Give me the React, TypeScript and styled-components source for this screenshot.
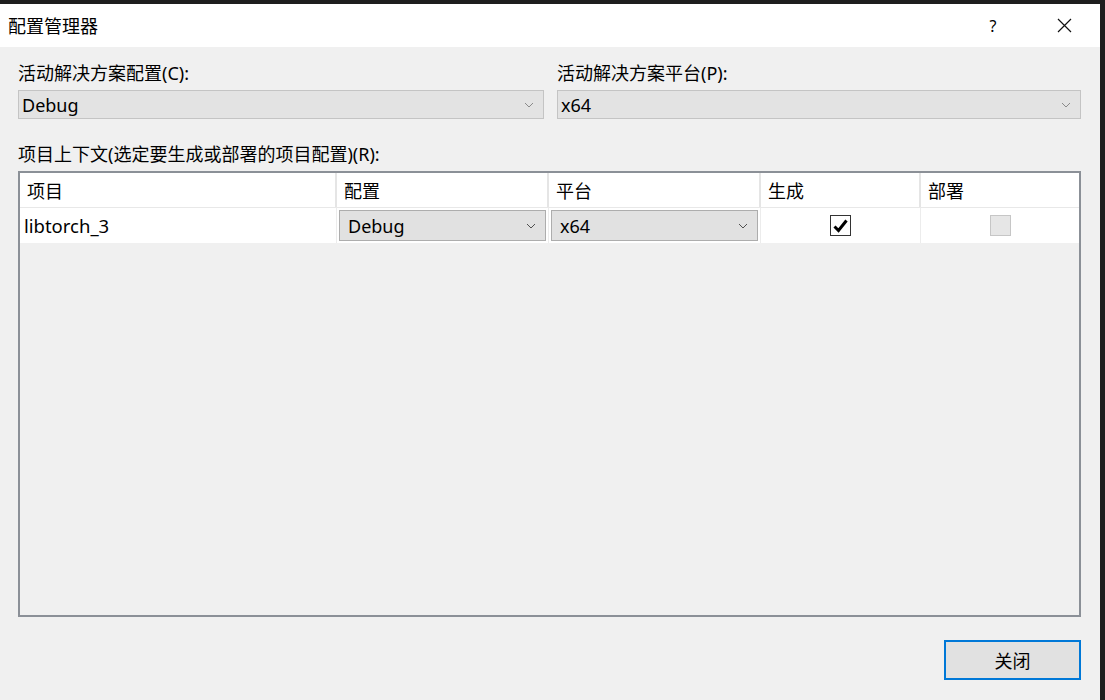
import { createGlobalStyle, styled } from 'styled-components';

const GlobalStyle = createGlobalStyle`
  html, body {
    margin: 0;
    padding: 0;
    background: #1e1e1e;
  }
  * {
    box-sizing: border-box;
  }
`;

const FONT = `"Noto Sans", "Noto Sans CJK SC", sans-serif`;

type Column = { key: string; title: string };

const COLUMNS: Column[] = [
  { key: 'project', title: '项目' },
  { key: 'config', title: '配置' },
  { key: 'platform', title: '平台' },
  { key: 'build', title: '生成' },
  { key: 'deploy', title: '部署' },
];

const ROWS = [
  { project: 'libtorch_3', config: 'Debug', platform: 'x64', build: true, deploy: false },
];

const Chevron = ({ color }: { color: string }) => (
  <svg width="10" height="6" viewBox="0 0 10 6">
    <path d="M1 1 L5 5 L9 1" fill="none" stroke={color} strokeWidth="1" />
  </svg>
);

const Combo = ({ value, light }: { value: string; light?: boolean }) => (
  <ComboBox $light={light}>
    <ComboText>{value}</ComboText>
    <Chevron color={light ? '#8a8a8a' : '#505050'} />
  </ComboBox>
);

const App = () => {
  return (
    <>
      <GlobalStyle />
      <Frame>
        <Dialog>
          <TitleBar>
            <Title>配置管理器</Title>
            <TitleButtons>
              <HelpButton>?</HelpButton>
              <CloseIcon>
                <svg width="15" height="15" viewBox="0 0 15 15">
                  <path d="M1 1 L14 14 M14 1 L1 14" stroke="#111" strokeWidth="1.2" />
                </svg>
              </CloseIcon>
            </TitleButtons>
          </TitleBar>
          <Body>
            <SolutionRow>
              <Field>
                <Label>活动解决方案配置(C):</Label>
                <Combo value="Debug" light />
              </Field>
              <Field>
                <Label>活动解决方案平台(P):</Label>
                <Combo value="x64" light />
              </Field>
            </SolutionRow>
            <ContextLabel>项目上下文(选定要生成或部署的项目配置)(R):</ContextLabel>
            <Table>
              <HeaderRow>
                {COLUMNS.map((c) => (
                  <HeaderCell key={c.key}>{c.title}</HeaderCell>
                ))}
              </HeaderRow>
              {ROWS.map((r) => (
                <DataRow key={r.project}>
                  <TextCell>{r.project}</TextCell>
                  <ComboCell>
                    <Combo value={r.config} />
                  </ComboCell>
                  <ComboCell>
                    <Combo value={r.platform} />
                  </ComboCell>
                  <CheckCell>
                    <CheckBox $checked={r.build}>
                      {r.build && (
                        <svg width="15" height="14" viewBox="0 0 15 14">
                          <path
                            d="M1.5 7.5 L5.5 11.5 L13.5 1.5"
                            fill="none"
                            stroke="#000"
                            strokeWidth="3"
                          />
                        </svg>
                      )}
                    </CheckBox>
                  </CheckCell>
                  <CheckCell $last>
                    <CheckBox $disabled={!r.deploy} />
                  </CheckCell>
                </DataRow>
              ))}
            </Table>
            <Footer>
              <PrimaryButton>关闭</PrimaryButton>
            </Footer>
          </Body>
        </Dialog>
      </Frame>
    </>
  );
};

export default App;

const Frame = styled.div`
  width: 1105px;
  height: 700px;
  padding: 4px 5px 0 0;
  background: #1e1e1e;
  font-family: ${FONT};
  color: #000;
`;

const Dialog = styled.div`
  width: 1100px;
  height: 696px;
  display: flex;
  flex-direction: column;
  background: #f0f0f0;
`;

const TitleBar = styled.div`
  height: 43px;
  display: flex;
  align-items: center;
  justify-content: space-between;
  background: #fff;
  padding-left: 8px;
`;

const Title = styled.div`
  font-size: 18px;
  line-height: 24px;
`;

const TitleButtons = styled.div`
  display: flex;
  align-items: center;
  height: 100%;
`;

const HelpButton = styled.div`
  width: 46px;
  text-align: center;
  font-size: 16px;
  margin-right: 25px;
`;

const CloseIcon = styled.div`
  width: 46px;
  height: 100%;
  display: flex;
  align-items: center;
  justify-content: center;
  margin-right: 13px;
`;

const Body = styled.div`
  flex: 1;
  display: flex;
  flex-direction: column;
  padding: 14px 19px 0 18px;
`;

const SolutionRow = styled.div`
  display: grid;
  grid-template-columns: 526px 1fr;
  gap: 13px;
`;

const Field = styled.div`
  display: flex;
  flex-direction: column;
  gap: 5px;
`;

const Label = styled.div`
  font-size: 18px;
  line-height: 24px;
`;

const ContextLabel = styled(Label)`
  margin-top: 23px;
  margin-bottom: 5px;
`;

const ComboBox = styled.div<{ $light?: boolean }>`
  height: ${(p) => (p.$light ? '29px' : '31px')};
  display: flex;
  align-items: center;
  justify-content: space-between;
  padding: 0 9px 0 ${(p) => (p.$light ? '3px' : '8px')};
  background: ${(p) => (p.$light ? '#e3e3e3' : '#e1e1e1')};
  border: 1px solid ${(p) => (p.$light ? '#c4c4c4' : '#adadad')};
`;

const ComboText = styled.span`
  font-size: 18px;
  line-height: 24px;
`;

const Table = styled.div`
  height: 446px;
  border: 2px solid #8b9097;
  background: #f0f0f0;
  display: flex;
  flex-direction: column;
`;

const gridColumns = `317px 212px 212px 160px 1fr`;

const HeaderRow = styled.div`
  display: grid;
  grid-template-columns: ${gridColumns};
  height: 35px;
  background: #fff;
  border-bottom: 1px solid #e8e8e8;
`;

const HeaderCell = styled.div`
  display: flex;
  align-items: center;
  padding-left: 7px;
  font-size: 18px;
  border-right: 2px solid #e5e5e5;
  &:last-child {
    border-right: none;
  }
`;

const DataRow = styled.div`
  display: grid;
  grid-template-columns: ${gridColumns};
  height: 35px;
  background: #fff;
`;

const TextCell = styled.div`
  display: flex;
  align-items: center;
  padding-left: 4px;
  font-size: 18.5px;
  border-right: 1px solid #ececec;
`;

const ComboCell = styled.div`
  padding: 2px;
  border-right: 1px solid #ececec;
`;

const CheckCell = styled.div<{ $last?: boolean }>`
  display: flex;
  align-items: center;
  justify-content: center;
  border-right: ${(p) => (p.$last ? 'none' : '1px solid #ececec')};
`;

const CheckBox = styled.div<{ $checked?: boolean; $disabled?: boolean }>`
  width: 21px;
  height: 21px;
  display: flex;
  align-items: center;
  justify-content: center;
  background: ${(p) => (p.$disabled ? '#e6e6e6' : '#fff')};
  border: ${(p) => (p.$disabled ? '1px solid #c6c6c6' : '1.5px solid #333')};
`;

const Footer = styled.div`
  display: flex;
  justify-content: flex-end;
  margin-top: 23px;
`;

const PrimaryButton = styled.div`
  width: 137px;
  height: 40px;
  display: flex;
  align-items: center;
  justify-content: center;
  background: #e1e1e1;
  border: 2px solid #0078d7;
  font-size: 18px;
`;
